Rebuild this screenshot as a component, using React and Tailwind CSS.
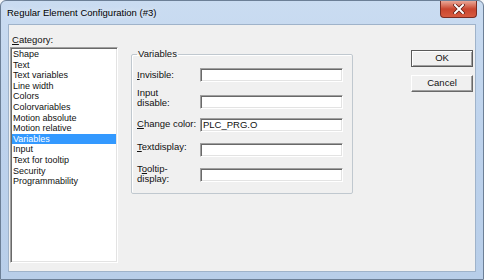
import React from 'react';

const categories = [
    'Shape',
    'Text',
    'Text variables',
    'Line width',
    'Colors',
    'Colorvariables',
    'Motion absolute',
    'Motion relative',
    'Variables',
    'Input',
    'Text for tooltip',
    'Security',
    'Programmability',
];

const sunken = 'border border-t-[#a0a0a0] border-l-[#a0a0a0] border-r-white border-b-white shadow-[inset_1px_1px_0_#696969,inset_-1px_-1px_0_#e3e3e3] bg-white';

const Field = ({ value, className = '' }) => (
    <div className={`w-[143px] h-[14px] ${sunken} pl-[2px] text-[9.5px] leading-[12px] text-[#111] ${className}`}>
        {value}
    </div>
);

const Button = ({ children, isDefault }) => (
    <div className={`w-[62px] h-[17px] flex items-center justify-center text-[9.5px] text-[#111] bg-[#f0f0f0] border ${isDefault ? 'border-[#5a5a5a] shadow-[inset_1px_1px_0_#fff,inset_-1px_-1px_0_#a0a0a0]' : 'border-t-white border-l-white border-r-[#696969] border-b-[#696969] shadow-[inset_-1px_-1px_0_#a0a0a0]'}`}>
        {children}
    </div>
);

const App = () => {
    return (
        <div className="w-[484px] h-[280px] bg-[#f3f6f9] overflow-hidden" style={{ fontFamily: '"Liberation Sans", Arial, sans-serif' }}>
            <div className="w-[484px] h-[280px] flex flex-col rounded-t-[6px] border border-[#6c7f96] bg-gradient-to-b from-[#cadcf1] via-[#bdd2ec] to-[#b8cee9]">
                {/* Title bar */}
                <div className="h-[23px] flex items-start shrink-0">
                    <span className="ml-[6px] mt-[6px] text-[9.5px] leading-[12px] text-black [text-shadow:0_0_6px_#fff]">Regular Element Configuration (#3)</span>
                    <div className="ml-auto mr-[6px] w-[37px] h-[17px] rounded-b-[4px] border border-t-0 border-[#7a2c22] bg-gradient-to-b from-[#e9a797] via-[#c9452e] to-[#d75b40] flex items-center justify-center">
                        <svg width="12" height="10" viewBox="0 0 12 10">
                            <path d="M2 1 L10 9 M10 1 L2 9" stroke="#5a1a12" strokeWidth="3.4" strokeLinecap="square" />
                            <path d="M2 1 L10 9 M10 1 L2 9" stroke="#fff" strokeWidth="2" strokeLinecap="square" />
                        </svg>
                    </div>
                </div>

                {/* Client area */}
                <div className="mx-[7px] mb-[7px] flex-1 bg-[#f0f0f0] border border-[#9fb3ca] flex items-start">
                    {/* Category column */}
                    <div className="ml-[1px] flex flex-col">
                        <div className="ml-[2px] mt-[9px] h-[12px] text-[9.5px] leading-[12px] text-[#111]">
                            <u>C</u>ategory:
                        </div>
                        <div className={`mt-[1px] w-[108px] h-[216px] ${sunken} p-[1px]`}>
                            {categories.map((c) => (
                                <div
                                    key={c}
                                    className={`h-[10.6px] pl-[1px] text-[9px] leading-[10.6px] whitespace-nowrap ${c === 'Variables' ? 'bg-[#3399ff] text-white' : 'text-[#111]'}`}
                                >
                                    {c}
                                </div>
                            ))}
                        </div>
                    </div>

                    {/* Variables group */}
                    <fieldset className="ml-[13px] mt-[24px] w-[222px] border border-[#c0c8cf] rounded-[2px] shadow-[inset_1px_1px_0_#fff] pl-[5px] pb-[9px]">
                        <legend className="px-[1px] text-[9.5px] leading-[10px] text-[#111]">Variables</legend>
                        <div className="mt-[9px] flex items-start">
                            <div className="w-[63px] mt-[2px] text-[9.5px] leading-[10px] text-[#111]"><u>I</u>nvisible:</div>
                            <Field />
                        </div>
                        <div className="mt-[6px] flex items-start">
                            <div className="w-[63px] text-[9.5px] leading-[10px] text-[#111]">Input<br />disable:</div>
                            <Field className="mt-[7px]" />
                        </div>
                        <div className="mt-[9px] flex items-start">
                            <div className="w-[63px] mt-[1px] text-[9.5px] leading-[10px] text-[#111]"><u>C</u>hange color:</div>
                            <Field value="PLC_PRG.O" />
                        </div>
                        <div className="mt-[10px] flex items-start">
                            <div className="w-[63px] text-[9.5px] leading-[10px] text-[#111]"><u>T</u>extdisplay:</div>
                            <Field className="mt-[1px]" />
                        </div>
                        <div className="mt-[7px] flex items-start">
                            <div className="w-[63px] text-[9.5px] leading-[10px] text-[#111]">T<u>o</u>oltip-<br />display:</div>
                            <Field className="mt-[4px]" />
                        </div>
                    </fieldset>

                    {/* Buttons */}
                    <div className="ml-[58px] mt-[25px] flex flex-col gap-[8px]">
                        <Button isDefault>OK</Button>
                        <Button>Cancel</Button>
                    </div>
                </div>
            </div>
        </div>
    );
};

export default App;
